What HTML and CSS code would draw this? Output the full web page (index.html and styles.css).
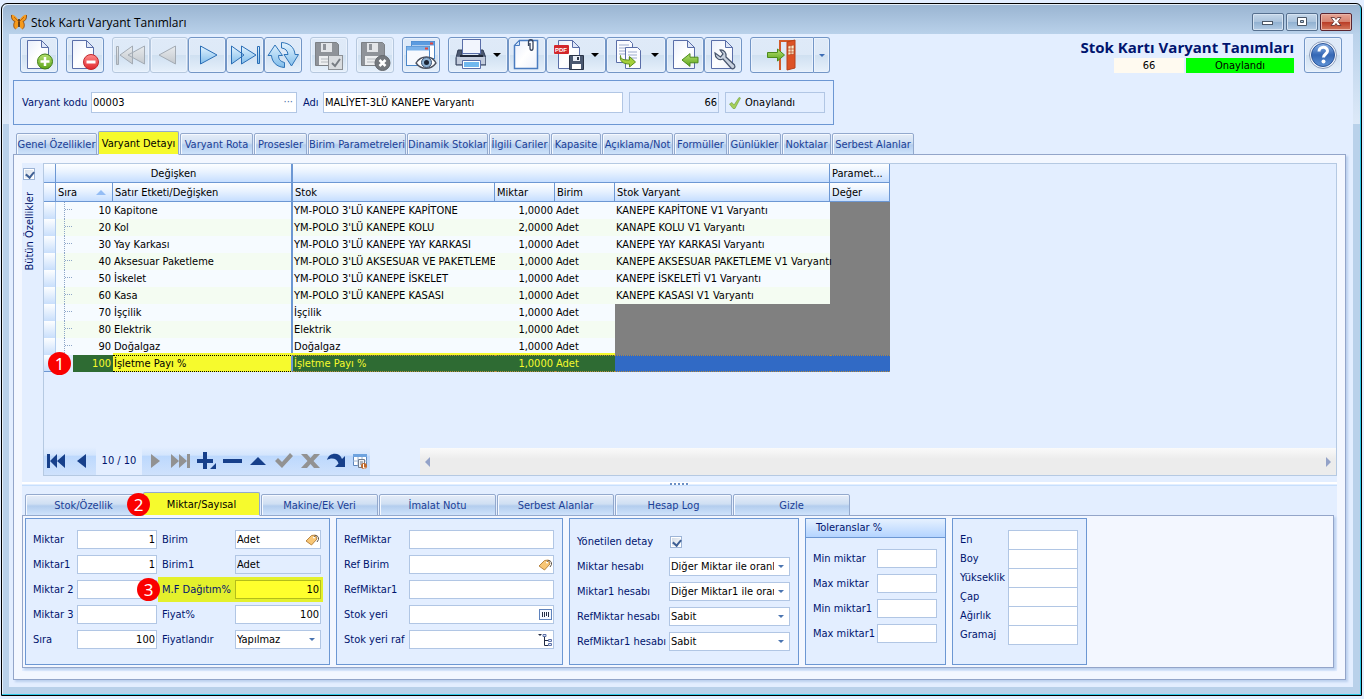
FILE: index.html
```
<!DOCTYPE html>
<html lang="tr">
<head>
    <meta charset="UTF-8">
    <meta name="viewport" content="width=device-width, initial-scale=1.0">
    <link rel="stylesheet" href="styles.css">
    <title>Stok Kartı Varyant Tanımları</title>
</head>
<body>
    <!-- Shared gradients and shapes for the icons -->
    <svg class="defs" width="0" height="0" aria-hidden="true">
        <defs>
            <linearGradient id="gPage" x1="0" y1="0" x2="1" y2="1"><stop offset="0" stop-color="#e9eefb"/><stop offset="0.5" stop-color="#fff"/><stop offset="1" stop-color="#edf1fb"/></linearGradient>
            <linearGradient id="gGreen" x1="0" y1="0" x2="0" y2="1"><stop offset="0" stop-color="#b5e070"/><stop offset="1" stop-color="#5da51c"/></linearGradient>
            <linearGradient id="gRed" x1="0" y1="0" x2="0" y2="1"><stop offset="0" stop-color="#ff8d8d"/><stop offset="1" stop-color="#e0252b"/></linearGradient>
            <linearGradient id="gBlue" x1="0" y1="0" x2="0" y2="1"><stop offset="0" stop-color="#e4f4ff"/><stop offset="1" stop-color="#7fbcea"/></linearGradient>
            <linearGradient id="gGray" x1="0" y1="0" x2="0" y2="1"><stop offset="0" stop-color="#e8ebee"/><stop offset="1" stop-color="#c3c8cd"/></linearGradient>
            <linearGradient id="gHelp" x1="0" y1="0" x2="0" y2="1"><stop offset="0" stop-color="#8fb6ea"/><stop offset="0.5" stop-color="#3467b5"/><stop offset="1" stop-color="#5f93d6"/></linearGradient>
            <symbol id="page" viewBox="0 0 22 29"><path d="M.5.5h14l7 7v21H.5z" fill="url(#gPage)" stroke="#5a6ea8"/><path d="M14.500.5v7h7z" fill="#dfe7f8" stroke="#5a6ea8"/></symbol>
            <symbol id="disk" viewBox="0 0 24 24"><path d="M.5.5h21l2 2v21H.5z" fill="#8f9399" stroke="#7c8085"/><path d="M6 1h11v9H6z" fill="#e3e5e8"/><path d="M8 2h3v6H8z" fill="#8f9399"/><path d="M4 14h16v9H4z" fill="#eceef0"/><path d="M6 17h12M6 20h12" stroke="#b4b8bc"/></symbol>
            <symbol id="arrow" viewBox="0 0 17 14"><path d="M.5 7l8-6.400v3.600h8v5.600h-8v3.600z" fill="url(#gGreen)" stroke="#4b8a1c"/></symbol>
            <symbol id="tag" viewBox="0 0 14 12"><path d="M1 7L6.500 1.500l4-.5L12 5 6.500 11z" fill="#f8c675" stroke="#a87026" stroke-width=".8"/><circle cx="9" cy="3.500" r="1" fill="#fff"/><path d="M9 3c1.500-3 5-1 4.500 2.500L12 8" fill="none" stroke="#5b5147"/></symbol>
        </defs>
    </svg>

    <div class="window">
        <header class="titlebar">
            <svg class="logo" viewBox="0 0 16 16"><path d="M8 7C6 3 2 0 .5 1c-.5 3 1 6 3.500 6.500C2 9 2.500 14 4.500 15 6.500 15 7.500 12 8 10c.5 2 1.500 5 3.500 5 2-1 2.500-6 .5-7.500C14.500 7 16 4 15.500 1 14 0 10 3 8 7z" fill="#f59a1c"/><path d="M.5 1c-.5 3 1 6 3.500 6.500M15.500 1c.5 3-1 6-3.500 6.500M4.500 15C2.500 14 2 10 4 7.500M11.500 15c2-1 2.500-5 .5-7.500" stroke="#7a3b0c" stroke-width=".8" fill="none"/><path d="M8 5v8" stroke="#3f2008" stroke-width="1.500"/><path d="M3 3l5 5M13 3L8 8" stroke="#a3520f" stroke-width=".7"/></svg>
            <h1>Stok Kartı Varyant Tanımları</h1>
            <button class="win-btn" aria-label="Küçült"><svg viewBox="0 0 30 16"><rect x="9.500" y="7.500" width="10" height="3" fill="#fff" stroke="#4a5666"/></svg></button>
            <button class="win-btn" aria-label="Büyüt"><svg viewBox="0 0 30 16"><path d="M10.500 3.500h9v8h-9z M13.500 6.500v2h3v-2z" fill="#fff" fill-rule="evenodd" stroke="#4a5666"/></svg></button>
            <button class="win-btn close" aria-label="Kapat"><svg viewBox="0 0 30 16"><path d="M10 3.500h3.500L15 5.500l1.500-2H20L17 7.500l3 4h-3.500L15 9.500l-1.500 2H10l3-4z" fill="#fff" stroke="#5a2a2a" stroke-width=".8"/></svg></button>
        </header>

        <main class="content">
            <div class="toolbar">
                <div class="btn-group">
                    <button class="tool" aria-label="Yeni"><svg viewBox="0 0 38 36"><use href="#page" x="7" y="3" width="22" height="29"/><circle cx="25" cy="24.500" r="7.500" fill="url(#gGreen)" stroke="#3f7d12"/><path d="M25 20v9M20.500 24.500h9" stroke="#fff" stroke-width="2.500"/></svg></button>
                </div>
                <div class="btn-group">
                    <button class="tool" aria-label="Sil"><svg viewBox="0 0 38 36"><use href="#page" x="6" y="3" width="22" height="29"/><circle cx="25" cy="25" r="7.500" fill="url(#gRed)" stroke="#c0272c"/><path d="M20.500 25h9" stroke="#fff" stroke-width="3"/></svg></button>
                </div>
                <div class="btn-group">
                    <button class="tool off" aria-label="İlk"><svg viewBox="0 0 38 36"><path d="M4.500 9.500h2v18h-2zM20.500 9v18L8 18zM32.500 9v18L16 18z" fill="url(#gGray)" stroke="#a3abb4"/></svg></button>
                    <button class="tool off" aria-label="Önceki"><svg viewBox="0 0 38 36"><path d="M25.500 9v18L9 18z" fill="url(#gGray)" stroke="#a3abb4"/></svg></button>
                    <button class="tool" aria-label="Sonraki"><svg viewBox="0 0 38 36"><path d="M12.500 9v18L29 18z" fill="url(#gBlue)" stroke="#2a6db5"/></svg></button>
                    <button class="tool" aria-label="Son"><svg viewBox="0 0 38 36"><path d="M5.500 9v18L18 18zM15.500 9v18L30 18zM31.500 9.500h2v17h-2z" fill="url(#gBlue)" stroke="#2a6db5"/></svg></button>
                    <button class="tool" aria-label="Yenile"><svg viewBox="0 0 38 36"><path d="M4 18.500L11 8l7.500 10.500h-4c0 4 2 6 6 7v5C12.500 30 8 25 7.500 18.500zM34.500 17.500L27.500 29 20 17.500h4c-.5-4-2.500-6-6.500-6.500V5.500c8 .5 13 5 13.500 12z" fill="url(#gBlue)" stroke="#2f74b8"/></svg></button>
                </div>
                <div class="btn-group">
                    <button class="tool off" aria-label="Kaydet"><svg viewBox="0 0 38 36"><use href="#disk" x="5" y="5" width="24" height="24"/><rect x="18.500" y="18.500" width="14" height="14" fill="#d9dcdf" stroke="#8d9196"/><path d="M22 26l3 3 5-7" fill="none" stroke="#777c82" stroke-width="2"/></svg></button>
                </div>
                <div class="btn-group">
                    <button class="tool off" aria-label="Vazgeç"><svg viewBox="0 0 38 36"><use href="#disk" x="5" y="5" width="24" height="24"/><circle cx="26.500" cy="26" r="7.500" fill="#74787d" stroke="#63676c"/><path d="M23.500 23l6 6M29.500 23l-6 6" stroke="#fff" stroke-width="2.500"/></svg></button>
                </div>
                <div class="btn-group">
                    <button class="tool" aria-label="İzle"><svg viewBox="0 0 38 36"><rect x="9.500" y="4.500" width="23" height="17" fill="#fff" stroke="#4b86c8"/><path d="M9.500 4.500h23v4h-23z" fill="#5b9be0"/><rect x="4.500" y="9.500" width="23" height="19" fill="#f6f9fe" stroke="#4b86c8"/><path d="M4.500 9.500h23v4h-23z" fill="#7bb2ea"/><path d="M28 5.500h3v2h-3zM23 10.500h3v2h-3z" fill="#e2463c"/><path d="M14 26c5-8 16-8 20 0-5 7-15 7-20 0z" fill="#fff" stroke="#4a4f5c" stroke-width="1.300"/><circle cx="24.500" cy="25.500" r="5" fill="#8fb3d4" stroke="#3d5373"/><circle cx="24.500" cy="25.500" r="2.500" fill="#1c2536"/></svg></button>
                </div>
                <div class="btn-group">
                    <button class="tool wide" aria-label="Yazdır"><svg viewBox="0 0 38 36"><path d="M10 13h4v6h17v-6h4l3 8v7H8v-7z" fill="#4b5870" stroke="#2f3a52"/><rect x="14.500" y="2.500" width="18" height="14" fill="#f2f5fd" stroke="#5a6ea8"/><rect x="8.500" y="19.500" width="29" height="8" rx="1" fill="#c3ccdc" stroke="#5f6c86"/><path d="M12 18h23v2H12z" fill="#1f2737"/><path d="M14.500 23.500h18v8h-18z" fill="#fff" stroke="#5a6ea8"/><path d="M16 25h15v5H16z" fill="#71b8ee"/></svg><i class="caret"></i></button>
                    <button class="tool" aria-label="Ekler"><svg viewBox="0 0 38 36"><path d="M11.500 3.500h18v28h-23v-23z" fill="url(#gPage)" stroke="#4a7cc0" stroke-width="1.500"/><path d="M6.500 8.500h5v-5z" fill="#cfe1f6" stroke="#4a7cc0"/><path d="M20.500 9V5c0-3 4.500-3 4.500 0v6c0 3-3 3-3 0V6" fill="none" stroke="#35435e" stroke-width="1.300"/></svg></button>
                    <button class="tool wide" aria-label="PDF kaydet"><svg viewBox="0 0 38 36"><use href="#page" x="12" y="3" width="22" height="29"/><rect x="8" y="8" width="15" height="9" rx="1" fill="#d3262b"/><text x="9" y="15" class="pdf">PDF</text><path d="M23.500 18.500h14v14h-14z" fill="#4a5870" stroke="#2b3548"/><path d="M27 19h7v5h-7z" fill="#e8edf6"/><path d="M26 27h9v5h-9z" fill="#fff"/><path d="M31 20h2v3h-2z" fill="#2b3548"/></svg><i class="caret"></i></button>
                    <button class="tool wide" aria-label="Kopyala"><svg viewBox="0 0 38 36"><path d="M10.500 3.500h13l3 3v19h-16z" fill="#fbfcff" stroke="#5a6ea8"/><path d="M13 8h10M13 11h10M13 14h6M13 17h6" stroke="#9daccd"/><path d="M19.500 10.500h12l3 3v18h-15z" fill="#fbfcff" stroke="#5a6ea8"/><path d="M22 15h9M22 18h9M22 21h9" stroke="#9daccd"/><path d="M14.500 18.500c0 4 3 4.500 9 4.500v-3.500l6 5.500-6 5v-3c-7 0-10-3-9-8.500z" fill="#a4cf3c" stroke="#5c8f1a"/></svg><i class="caret"></i></button>
                    <button class="tool" aria-label="İçe al"><svg viewBox="0 0 38 36"><use href="#page" x="7" y="3" width="22" height="29"/><use href="#arrow" x="15" y="16" width="18" height="14"/></svg></button>
                    <button class="tool" aria-label="Ayarlar"><svg viewBox="0 0 38 36"><use href="#page" x="7" y="3" width="22" height="29"/><path d="M11 16c0 5 4 8 8 6l8 9c2 2 5-.5 3.500-3L22 20c1-4-2-7.500-6-7l3 4-2.500 3z" fill="#c9d2df" stroke="#47546b" stroke-width="1.200"/></svg></button>
                </div>
                <div class="btn-group">
                    <button class="tool exit" aria-label="Çıkış"><svg viewBox="0 0 38 36"><path d="M17 3v30M17 4h15" stroke="#d35a2a" stroke-width="2"/><path d="M24 5l8-2v28l-8 2z" fill="#dd5226" stroke="#b5411b"/><path d="M25 9l6-1v9l-6 1z" fill="#fbe8c8" stroke="#b5411b" stroke-width=".6"/><path d="M28 8v10M25 12h6M25 15h6" stroke="#b5411b" stroke-width=".7"/><path d="M21.500 18l-7-6v3.500h-10v5h10V24z" fill="url(#gGreen)" stroke="#4b8a1c"/></svg></button>
                    <button class="tool drop" aria-label="Çıkış seçenekleri"><i class="caret small"></i></button>
                </div>

                <div class="status">
                    <h2>Stok Kartı Varyant Tanımları</h2>
                    <div class="status-row"><span class="status-no">66</span><span class="status-ok">Onaylandı</span></div>
                </div>
                <button class="tool help" aria-label="Yardım"><svg viewBox="0 0 38 36"><circle cx="19" cy="18" r="13.500" fill="#f4f8ff" stroke="#8c9cb8"/><circle cx="19" cy="18" r="11.500" fill="url(#gHelp)" stroke="#2c5598"/><path d="M15 14.500c0-5.500 8.500-5.500 8.500-.5 0 3-4 3-4 6.500" fill="none" stroke="#fff" stroke-width="3"/><circle cx="19.500" cy="24.500" r="2" fill="#fff"/></svg></button>
            </div>

            <div class="record">
                <label for="kod">Varyant kodu</label>
                <div class="field code"><input id="kod" type="text" value="00003"><span class="dots">···</span></div>
                <label for="adi">Adı</label>
                <input id="adi" class="name" type="text" value="MALİYET-3LÜ KANEPE Varyantı">
                <input class="state-no" type="text" value="66" aria-label="Durum no" readonly>
                <div class="state"><svg viewBox="0 0 12 12"><path d="M.5 7l2.500-1.500L5 8l5-7.500 1.500.5L6 11.500H4z" fill="#a4cf5a" stroke="#6f9f35" stroke-width=".6"/></svg>Onaylandı</div>
            </div>

            <nav class="tabs main-tabs" role="tablist">
                <button role="tab">Genel Özellikler</button>
                <button role="tab" class="active">Varyant Detayı</button>
                <button role="tab">Varyant Rota</button>
                <button role="tab">Prosesler</button>
                <button role="tab">Birim Parametreleri</button>
                <button role="tab">Dinamik Stoklar</button>
                <button role="tab">İlgili Cariler</button>
                <button role="tab">Kapasite</button>
                <button role="tab">Açıklama/Not</button>
                <button role="tab">Formüller</button>
                <button role="tab">Günlükler</button>
                <button role="tab">Noktalar</button>
                <button role="tab">Serbest Alanlar</button>
            </nav>

            <section class="page">
                <div class="upper">
                    <div class="side">
                        <input type="checkbox" id="tum" checked>
                        <label for="tum">Bütün Özellikler</label>
                    </div>
                    <div class="grid-box">
                        <table class="grid">
                            <colgroup>
                                <col class="c-ind"><col class="c-sira"><col class="c-etiket"><col class="c-stok"><col class="c-miktar"><col class="c-birim"><col class="c-varyant"><col class="c-deger">
                            </colgroup>
                            <thead>
                                <tr><th></th><th colspan="2" class="mid split">Değişken</th><th colspan="4"></th><th>Paramet...</th></tr>
                                <tr><th></th><th>Sıra<i class="sort"></i></th><th class="split">Satır Etketi/Değişken</th><th>Stok</th><th>Miktar</th><th>Birim</th><th>Stok Varyant</th><th>Değer</th></tr>
                            </thead>
                            <tbody>
                                <tr><td></td><td class="no">10</td><td>Kapitone</td><td>YM-POLO 3'LÜ KANEPE KAPİTONE</td><td>1,0000</td><td>Adet</td><td>KANEPE KAPİTONE V1 Varyantı</td><td class="na"></td></tr>
                                <tr><td></td><td class="no">20</td><td>Kol</td><td>YM-POLO 3'LÜ KANEPE KOLU</td><td>2,0000</td><td>Adet</td><td>KANAPE KOLU V1 Varyantı</td><td class="na"></td></tr>
                                <tr><td></td><td class="no">30</td><td>Yay Karkası</td><td>YM-POLO 3'LÜ KANEPE YAY KARKASI</td><td>1,0000</td><td>Adet</td><td>KANEPE YAY KARKASI Varyantı</td><td class="na"></td></tr>
                                <tr><td></td><td class="no">40</td><td>Aksesuar Paketleme</td><td>YM-POLO 3'LÜ AKSESUAR VE PAKETLEME</td><td>1,0000</td><td>Adet</td><td>KANEPE AKSESUAR PAKETLEME V1 Varyantı</td><td class="na"></td></tr>
                                <tr><td></td><td class="no">50</td><td>İskelet</td><td>YM-POLO 3'LÜ KANEPE İSKELET</td><td>1,0000</td><td>Adet</td><td>KANEPE İSKELETİ V1 Varyantı</td><td class="na"></td></tr>
                                <tr><td></td><td class="no">60</td><td>Kasa</td><td>YM-POLO 3'LÜ KANEPE KASASI</td><td>1,0000</td><td>Adet</td><td>KANEPE KASASI V1 Varyantı</td><td class="na"></td></tr>
                                <tr><td></td><td class="no">70</td><td>İşçilik</td><td>İşçilik</td><td>1,0000</td><td>Adet</td><td class="na"></td><td class="na"></td></tr>
                                <tr><td></td><td class="no">80</td><td>Elektrik</td><td>Elektrik</td><td>1,0000</td><td>Adet</td><td class="na"></td><td class="na"></td></tr>
                                <tr><td></td><td class="no">90</td><td>Doğalgaz</td><td>Doğalgaz</td><td>1,0000</td><td>Adet</td><td class="na"></td><td class="na"></td></tr>
                                <tr class="selected"><td><b class="callout">1</b></td><td class="no">100</td><td class="edit">İşletme Payı %</td><td>İşletme Payı %</td><td>1,0000</td><td>Adet</td><td class="blank"></td><td class="blank"></td></tr>
                            </tbody>
                        </table>

                        <div class="grid-foot">
                            <div class="navigator">
                                <button aria-label="İlk kayıt"><svg viewBox="0 0 26 28"><path d="M3 7h3v14H3zM13 7v14l-7-7zM21 7v14l-8-7z"/></svg></button>
                                <button aria-label="Önceki kayıt"><svg viewBox="0 0 26 28"><path d="M16 7v14l-9-7z"/></svg></button>
                                <span>10 / 10</span>
                                <button class="off" aria-label="Sonraki kayıt"><svg viewBox="0 0 26 28"><path d="M9 7v14l9-7z"/></svg></button>
                                <button class="off" aria-label="Son kayıt"><svg viewBox="0 0 26 28"><path d="M3 7v14l8-7zM11 7v14l8-7zM19 7h3v14h-3z"/></svg></button>
                                <button aria-label="Ekle"><svg viewBox="0 0 26 28"><path d="M9 5h4v7h6v4h-6v6H9v-6H3v-4h6zM22 16v6h-6z"/></svg></button>
                                <button aria-label="Çıkar"><svg viewBox="0 0 26 28"><path d="M3 12h19v4H3z"/></svg></button>
                                <button aria-label="Düzenle"><svg viewBox="0 0 26 28"><path d="M4 18h16l-8-8z"/></svg></button>
                                <button class="off" aria-label="Onayla"><svg viewBox="0 0 26 28"><path d="M3 14l3-3 4 4 8-9 3 3-11 12z"/></svg></button>
                                <button class="off" aria-label="İptal"><svg viewBox="0 0 26 28"><path d="M3 7h6l3.500 4L16 7h6l-6.500 7 6.500 7h-6l-3.500-4L9 21H3l6.500-7z"/></svg></button>
                                <button aria-label="Tazele"><svg viewBox="0 0 26 28"><path d="M3 13c2-8 13-8 15-1l3-3v11h-10l3.500-3.500c-1-5-7-6.500-11.500-3.500z"/></svg></button>
                                <button class="last" aria-label="Tablo ayarı"><svg viewBox="0 0 20 28"><path d="M3.500 7.500h13v11h-13z" fill="#fff" stroke="#5e86bd"/><path d="M3 7h14v3H3z" fill="#6ea3df"/><path d="M3 14h14M8 10v9M12 10v5" stroke="#9db4d2"/><path d="M8.500 12.500h6v8h-6z" fill="#eef2f7" stroke="#6f7b8d"/><path d="M10 15h3M10 17h3" stroke="#6f7b8d"/><circle cx="14" cy="19" r="3" fill="#c0692c"/><path d="M13.500 17v4h2" stroke="#fff" fill="none"/></svg></button>
                            </div>
                            <div class="scrollbar"><i class="left"></i><i class="right"></i></div>
                        </div>
                    </div>
                </div>

                <div class="splitter"><i></i></div>

                <div class="lower">
                    <nav class="tabs sub-tabs" role="tablist">
                        <button role="tab">Stok/Özellik</button>
                        <button role="tab" class="active"><b class="callout">2</b>Miktar/Sayısal</button>
                        <button role="tab">Makine/Ek Veri</button>
                        <button role="tab">İmalat Notu</button>
                        <button role="tab">Serbest Alanlar</button>
                        <button role="tab">Hesap Log</button>
                        <button role="tab">Gizle</button>
                    </nav>

                    <div class="groups">
                        <fieldset class="group amounts">
                            <label for="miktar">Miktar</label><input id="miktar" class="num" type="text" value="1">
                            <label for="birim" class="second">Birim</label><div class="field"><input id="birim" type="text" value="Adet"><svg class="pick" viewBox="0 0 14 12"><use href="#tag"/></svg></div>
                            <label for="miktar1">Miktar1</label><input id="miktar1" class="num" type="text" value="1">
                            <label for="birim1" class="second">Birim1</label><input id="birim1" type="text" value="Adet" readonly>
                            <label for="miktar2">Miktar 2</label><input id="miktar2" class="num" type="text">
                            <label for="dagitim" class="second marked"><b class="callout">3</b>M.F Dağıtım%</label><div class="field marked"><input id="dagitim" class="num" type="text" value="10"></div>
                            <label for="miktar3">Miktar 3</label><input id="miktar3" class="num" type="text">
                            <label for="fiyat" class="second">Fiyat%</label><input id="fiyat" class="num" type="text" value="100">
                            <label for="sira">Sıra</label><input id="sira" class="num" type="text" value="100">
                            <label for="fiyatlandir" class="second">Fiyatlandır</label><div class="field select"><select id="fiyatlandir"><option>Yapılmaz</option></select></div>
                        </fieldset>

                        <fieldset class="group refs">
                            <label for="refmiktar">RefMiktar</label><input id="refmiktar" type="text">
                            <label for="refbirim">Ref Birim</label><div class="field"><input id="refbirim" type="text"><svg class="pick" viewBox="0 0 14 12"><use href="#tag"/></svg></div>
                            <label for="refmiktar1">RefMiktar1</label><input id="refmiktar1" type="text">
                            <label for="stokyeri">Stok yeri</label><div class="field"><input id="stokyeri" type="text"><svg class="pick" viewBox="0 0 14 12"><rect x="1.500" y=".5" width="12" height="10" fill="#f4f8ff" stroke="#5f83bd"/><path d="M4.500 3v5M6.500 3v5M8.500 3v4M10.500 3v5" stroke="#222c44"/></svg></div>
                            <label for="raf">Stok yeri raf</label><div class="field"><input id="raf" type="text"><svg class="pick" viewBox="0 0 14 12"><path d="M0 0h4L2 2z" fill="#222c44"/><path d="M6.500 3v8.500h4M6.500 6.500h4" stroke="#222c44" fill="none"/><path d="M5 .5h3v2H5zM10.500 5.500h3v2h-3zM10.500 9.500h3v2h-3z" fill="#dfe9fa" stroke="#5f73a8"/></svg></div>
                        </fieldset>

                        <fieldset class="group calc">
                            <label for="yonetilen">Yönetilen detay</label><input id="yonetilen" type="checkbox" checked>
                            <label for="mhesap">Miktar hesabı</label><div class="field select"><select id="mhesap"><option>Diğer Miktar ile oranlı</option></select></div>
                            <label for="m1hesap">Miktar1 hesabı</label><div class="field select"><select id="m1hesap"><option>Diğer Miktar1 ile oranlı</option></select></div>
                            <label for="rhesap">RefMiktar hesabı</label><div class="field select"><select id="rhesap"><option>Sabit</option></select></div>
                            <label for="r1hesap">RefMiktar1 hesabı</label><div class="field select"><select id="r1hesap"><option>Sabit</option></select></div>
                        </fieldset>

                        <div class="group tolerance">
                            <h3>Toleranslar %</h3>
                            <div class="tol-rows">
                                <label for="min">Min miktar</label><input id="min" type="text">
                                <label for="max">Max miktar</label><input id="max" type="text">
                                <label for="min1">Min miktar1</label><input id="min1" type="text">
                                <label for="max1">Max miktar1</label><input id="max1" type="text">
                            </div>
                        </div>

                        <fieldset class="group sizes">
                            <label for="en">En</label><input id="en" type="text">
                            <label for="boy">Boy</label><input id="boy" type="text">
                            <label for="yuk">Yükseklik</label><input id="yuk" type="text">
                            <label for="cap">Çap</label><input id="cap" type="text">
                            <label for="agirlik">Ağırlık</label><input id="agirlik" type="text">
                            <label for="gramaj">Gramaj</label><input id="gramaj" type="text">
                        </fieldset>
                    </div>
                </div>
            </section>
        </main>
    </div>
</body>
</html>
```
FILE: styles.css
```
* {
    box-sizing: border-box;
}

body {
    margin: 0;
    padding: 3px 2px 3px 1px;
    height: 100vh;
    background: #e3eeff;
    font-family: Tahoma, "DejaVu Sans Condensed", "Noto Sans", sans-serif;
    font-size: 11px;
    color: #000;
}

button, input, select {
    font: inherit;
    margin: 0;
}

.defs {
    position: absolute;
}

svg {
    display: block;
}

/* Window frame */
.window {
    display: flex;
    flex-direction: column;
    height: 100%;
    padding: 0 8px 8px 7px;
    border: 1px solid #000;
    border-radius: 6px 6px 0 0;
    background: linear-gradient(#99b4d1, #b9d1ea 30px, #dde9f8 120px, #b9d1ea 120px);
    box-shadow: inset -1px -1px 0 #2fc8e6, inset 1px 1px 0 #e6f0fa;
}

.titlebar {
    display: flex;
    align-items: center;
    height: 30px;
    flex: none;
    gap: 2px;
    padding: 6px 1px 0 2px;
}

.logo {
    width: 16px;
    height: 16px;
}

.titlebar h1 {
    flex: 1;
    margin: 0;
    padding-left: 2px;
    font: 12px "Open Sans", sans-serif;
}

.win-btn {
    width: 32px;
    height: 18px;
    padding: 0;
    border: 1px solid #56708f;
    border-radius: 2px;
    background: linear-gradient(#c6d8ea, #a9c2dc 50%, #8fb0d0 50%, #b4cce4);
    box-shadow: inset 0 0 0 1px #d5e3f2;
}

.win-btn.close {
    border-color: #5a2430;
    background: linear-gradient(#e8a595, #d5826f 50%, #b93a24 50%, #d47a5e);
    box-shadow: inset 0 0 0 1px #e9b5a8;
}

.content {
    display: flex;
    flex-direction: column;
    flex: 1;
    min-height: 0;
    padding: 3px 7px 7px 4px;
    background: #e3eeff;
}

/* Toolbar */
.toolbar {
    display: flex;
    gap: 8px;
    height: 36px;
    padding: 0 4px 0 7px;
    flex: none;
}

.btn-group {
    display: flex;
}

.tool {
    display: flex;
    align-items: center;
    width: 38px;
    height: 36px;
    padding: 0;
    border: 1px solid #7396c6;
    border-radius: 3px;
    background: linear-gradient(#dfeaf8, #dde9f7 50%, #cfe0f1 50%, #e6f0fb);
    box-shadow: inset 0 0 0 1px #eaf2fd;
}

.tool svg {
    width: 38px;
    height: 36px;
    margin: -1px;
    flex: none;
}

.tool.off {
    border-color: #b6c8de;
}

.tool.wide {
    width: 60px;
}

.tool.exit {
    width: 64px;
    justify-content: center;
    border-radius: 3px 0 0 3px;
}

.tool.drop {
    width: 16px;
    justify-content: center;
    border-left: 0;
    border-radius: 0 3px 3px 0;
}

.caret {
    border: 4px solid transparent;
    border-top-color: #000;
    border-bottom: 0;
    margin-left: 8px;
}

.caret.small {
    border-width: 3px;
    border-bottom: 0;
    border-top-color: #3d6db5;
    margin: 0;
}

.pdf {
    font: bold 6px "Liberation Sans", sans-serif;
    fill: #fff;
}

.status {
    margin-left: auto;
    display: flex;
    flex-direction: column;
    align-items: flex-end;
    justify-content: space-between;
}

.status h2 {
    margin: 0;
    font: bold 15px/20px "Open Sans", sans-serif;
    color: #00146e;
}

.status-row {
    display: flex;
    gap: 2px;
    text-align: center;
    line-height: 15px;
}

.status-no {
    width: 70px;
    background: #fffaf0;
}

.status-ok {
    width: 108px;
    background: #0f0;
}

.help {
    margin-left: 2px;
}

/* Record header */
.record {
    display: flex;
    align-items: center;
    align-self: flex-start;
    height: 45px;
    margin-top: 7px;
    padding: 0 8px;
    border: 1px solid #6c97d3;
    flex: none;
}

label {
    color: #00146e;
    white-space: nowrap;
}

input[type="text"], select {
    width: 100%;
    height: 19px;
    padding: 0 1px;
    border: 1px solid #b1c6e4;
    border-radius: 0;
    background: #fff;
    color: #000;
    outline: none;
}

input[readonly] {
    background: #e3eeff !important;
}

.num {
    text-align: right;
}

.field {
    position: relative;
}

.record label {
    width: 69px;
}

.record input[type="text"] {
    height: 21px;
}

.record .code {
    width: 206px;
    margin-right: 6px;
}

.record .code + label {
    width: 20px;
}

.dots {
    position: absolute;
    right: 4px;
    top: 3px;
    color: #4a6fa8;
}

.record .name {
    width: 300px;
}

.record .state-no {
    width: 90px;
    margin: 0 6px;
    text-align: right;
}

.state {
    display: flex;
    align-items: center;
    gap: 4px;
    width: 100px;
    height: 21px;
    padding-left: 3px;
    border: 1px solid #b1c6e4;
}

.state svg {
    width: 12px;
    height: 12px;
}

/* Tabs */
.tabs {
    display: grid;
    align-items: end;
    justify-content: start;
    position: relative;
    height: 24px;
    margin-bottom: -1px;
    flex: none;
}

.tabs button {
    position: relative;
    height: 22px;
    padding: 1px 0 0;
    border: 1px solid #93a9cd;
    border-radius: 2px 2px 0 0;
    background: linear-gradient(#e6edf8, #cfdff3 45%, #b3cdee 55%, #cfe3fb);
    box-shadow: inset 1px 1px 0 #f5f9ff;
    color: #1b4096;
    white-space: nowrap;
}

.tabs .active {
    height: 24px;
    border-bottom-color: #f3f7ff;
    background: #f6fa2d;
    box-shadow: none;
    color: #000;
}

.main-tabs {
    grid-template-columns: 81px 81px 73px 53px 98px 81px 61px 50px 71px 53px 53px 49px 82px;
    gap: 1px;
    margin-top: 6px;
    margin-left: 3px;
}

.sub-tabs {
    grid-template-columns: repeat(7, 117px);
    gap: 1px;
    margin-left: 3px;
}

.page {
    display: flex;
    flex-direction: column;
    flex: 1;
    min-height: 0;
    padding: 8px;
    border: 1px solid #93a5c9;
    background: #f3f7ff;
    box-shadow: 2px 2px 2px #bcd0ee;
}

/* Detail grid */
.upper {
    display: flex;
    flex: 1;
    min-height: 0;
    background: #e3eeff;
}

.side {
    display: flex;
    flex-direction: column;
    align-items: center;
    width: 21px;
    padding: 5px 7px 0 0;
    gap: 12px;
}

.side label {
    writing-mode: vertical-rl;
    transform: rotate(180deg);
}

input[type="checkbox"] {
    appearance: none;
    position: relative;
    flex: none;
    width: 12px;
    height: 12px;
    border: 1px solid #9db4d6;
    background: linear-gradient(135deg, #cfd8e4, #fff);
    box-shadow: inset 0 0 0 1px #fff;
}

input[type="checkbox"]:checked::after {
    content: "";
    position: absolute;
    left: 3px;
    top: 1px;
    width: 4px;
    height: 6px;
    border: solid #3f5f94;
    border-width: 0 2px 2px 0;
    transform: rotate(40deg);
}

.grid-box {
    display: flex;
    flex-direction: column;
    justify-content: space-between;
    flex: 1;
    min-width: 0;
    border: 1px solid #b5c9e2;
}

.grid {
    table-layout: fixed;
    width: 846px;
    border-spacing: 0;
    line-height: 16px;
}

.c-ind { width: 12px; }
.c-sira { width: 57px; }
.c-etiket { width: 180px; }
.c-stok { width: 202px; }
.c-miktar, .c-birim, .c-deger { width: 60px; }
.c-varyant { width: 215px; }

.grid th {
    position: relative;
    height: 19px;
    padding: 2px 2px 0;
    border: solid #6c97d3;
    border-width: 0 1px 1px 0;
    background: linear-gradient(#fdfeff, #e8f2ff 45%, #c6deff);
    font-weight: normal;
    text-align: left;
    white-space: nowrap;
}

.grid .mid {
    text-align: center;
}

.grid .split {
    border-right-width: 2px;
}

.sort {
    position: absolute;
    right: 6px;
    top: 7px;
    border: 5px solid transparent;
    border-top: 0;
    border-bottom-color: #94bdf5;
}

.grid td {
    position: relative;
    height: 17px;
    padding: 1px 1px 0;
    background: #f6fbff;
    white-space: nowrap;
}

.grid tr:nth-child(even) td {
    background: #f4fcf2;
}

.grid tbody td:first-child {
    border-right: 1px solid #b5cff0;
    background: linear-gradient(#fdfeff, #c9dffc);
}

.grid td:nth-child(3) {
    border-right: 2px solid #6c97d3;
}

.grid td:nth-child(7) {
    z-index: 1;
}

.grid td.no, .grid td:nth-child(5) {
    text-align: right;
    padding-right: 2px;
}

.grid tbody td.na {
    background: #808080;
}

/* tree lines */
.no::before {
    content: "";
    position: absolute;
    left: 8px;
    top: 0;
    bottom: 0;
    width: 8px;
    border-left: 1px dotted #8ea6c8;
    background: linear-gradient(90deg, #8ea6c8 50%, transparent 50%) 0 7px / 2px 1px repeat-x;
}

/* selected row */
.grid tbody tr.selected td {
    padding-top: 0;
    border-top: 1px dotted #b58a3c;
    border-bottom: 1px dotted #b58a3c;
    background: #2e6b33;
    color: #f6fa2d;
    line-height: 15px;
}

.grid tbody tr.selected td:first-child {
    border-top: 0;
    border-bottom: 1px solid #6c97d3;
    background: linear-gradient(#fdfeff, #c9dffc);
}

.grid tbody tr.selected td.no {
    border-color: transparent;
    background: linear-gradient(90deg, #e3eeff 17px, #2e6b33 17px) border-box;
}

.selected .no::before {
    display: none;
}

.grid tbody tr.selected td.edit {
    border-top-color: #000;
    border-bottom-color: #000;
    background: #f6fa2d;
    color: #000;
}

.grid .selected td:nth-child(n+3):nth-child(-n+6) {
    box-shadow: 0 -2px 0 #f6fa2d;
}

.grid tbody tr.selected td.blank {
    background: #316ac5;
}

.callout {
    position: absolute;
    z-index: 2;
    width: 23px;
    height: 23px;
    border-radius: 50%;
    background: #fa0000;
    color: #fff;
    font: 17px/23px "Noto Sans", sans-serif;
    text-align: center;
}

.grid .selected td:first-child {
    z-index: 2;
}

.grid .callout {
    left: 4px;
    top: -3px;
}

.grid-foot {
    display: flex;
    justify-content: space-between;
    height: 28px;
    gap: 50px;
}

.navigator {
    display: flex;
}

.navigator button {
    width: 26px;
    padding: 0;
    border: 0;
    background: linear-gradient(#e3eeff, #d3e5fd 30%, #bcd8fd 31%, #cfe2fc);
}

.navigator svg {
    height: 28px;
    fill: #17408b;
}

.navigator .off svg {
    fill: #929292;
}

.navigator .last {
    width: 20px;
}

.navigator span {
    width: 46px;
    line-height: 28px;
    text-align: center;
    color: #00146e;
}

.scrollbar {
    display: flex;
    align-items: center;
    justify-content: space-between;
    flex: 1;
    height: 27px;
    margin-top: 1px;
    padding: 0 5px;
    background: linear-gradient(#fafafa, #ececec 40%);
}

.scrollbar i {
    border: 5px solid transparent;
}

.scrollbar .left {
    border-left: 0;
    border-right-color: #93a2c8;
}

.scrollbar .right {
    border-right: 0;
    border-left-color: #93a2c8;
}

/* Splitter between grid and details */
.splitter {
    display: flex;
    justify-content: center;
    align-items: center;
    height: 16px;
    flex: none;
    background: linear-gradient(#e3eeff 6px, #fff 6px 8px, #e3eeff 8px 9px, #c7dffc 9px 10px, #e3eeff 10px);
}

.splitter i {
    width: 19px;
    height: 2px;
    background: repeating-linear-gradient(90deg, #6c8fc4 0 2px, #fff 2px 4px);
}

.lower {
    flex: none;
    padding: 0 3px 3px 0;
    background: #e3eeff;
}

.groups {
    display: flex;
    gap: 6px;
    padding: 2px;
    border: 1px solid #93a5c9;
    background: #f3f7ff;
    box-shadow: 2px 2px 2px #bcd0ee;
}

.group {
    display: grid;
    align-items: center;
    align-content: start;
    grid-auto-rows: 19px;
    gap: 6px 0;
    min-width: 0;
    height: 147px;
    margin: 0;
    padding: 11px 7px;
    border: 1px solid #6c97d3;
    background: #e3eeff;
}

.amounts {
    grid-template-columns: 44px 80px 78px 86px;
    width: 305px;
}

.second {
    padding-left: 5px;
}

label.marked {
    position: relative;
    margin-left: 1px;
    padding: 0 0 0 4px;
    height: 25px;
    line-height: 25px;
    background: #e4f02c;
}

.field.marked {
    height: 25px;
    padding: 3px 2px 3px 0;
    margin-right: -2px;
    background: #e4f02c;
}

.field.marked input {
    border-color: #b4bd1a;
    background: #ffff2d;
}

label .callout {
    left: -21px;
    top: 1px;
}

.tabs .callout {
    left: -17px;
    top: 0;
}

.pick {
    position: absolute;
    right: 2px;
    top: 4px;
    width: 14px;
    height: 12px;
}

.field select {
    appearance: none;
    padding: 0 15px 0 1px;
    display: block;
}

.field.select::after {
    content: "";
    position: absolute;
    right: 6px;
    top: 8px;
    border: 3px solid transparent;
    border-top-color: #4a74b0;
    border-bottom: 0;
}

.refs {
    grid-template-columns: 65px 145px;
    width: 227px;
}

.calc {
    grid-template-columns: 92px 121px;
    width: 230px;
    padding: 13px 7px;
}

.calc input[type="checkbox"] {
    margin-left: 1px;
}

.tolerance {
    display: block;
    width: 141px;
    padding: 0;
}

.tolerance h3 {
    height: 19px;
    margin: 0;
    padding-left: 10px;
    border-bottom: 1px solid #6c97d3;
    background: linear-gradient(#e6f1ff, #b4d4ff);
    font-size: 11px;
    font-weight: normal;
    line-height: 18px;
    color: #00146e;
}

.tol-rows {
    display: grid;
    grid-template-columns: 64px 60px;
    align-items: center;
    gap: 6px 0;
    padding: 11px 7px;
}

.sizes {
    grid-template-columns: 48px 70px;
    width: 135px;
    gap: 0;
}

.sizes input[type="text"] {
    height: 20px;
}
```
